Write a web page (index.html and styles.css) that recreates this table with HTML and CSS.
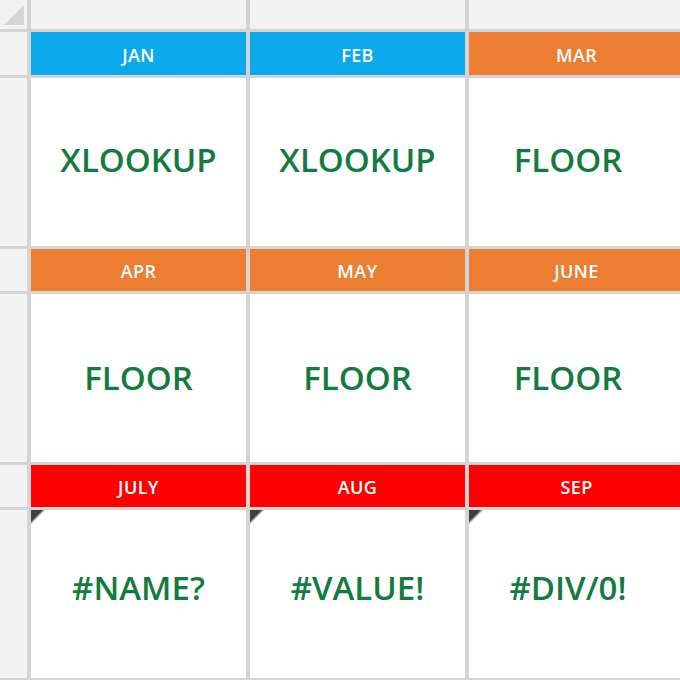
FILE: index.html
```html
<!DOCTYPE html>
<html>
<head>
<meta charset="utf-8">
<link rel="stylesheet" href="styles.css">
</head>
<body>
<div class="sheet">
  <div class="corner"><span class="select-all"></span></div>
  <div class="colhead"></div>
  <div class="colhead"></div>
  <div class="colhead"></div>

  <div class="rowhead"></div>
  <div class="month blue">JAN</div>
  <div class="month blue">FEB</div>
  <div class="month orange">MAR</div>

  <div class="rowhead"></div>
  <div class="cell row-a">XLOOKUP</div>
  <div class="cell row-a">XLOOKUP</div>
  <div class="cell row-a last-col">FLOOR</div>

  <div class="rowhead"></div>
  <div class="month orange">APR</div>
  <div class="month orange">MAY</div>
  <div class="month orange">JUNE</div>

  <div class="rowhead"></div>
  <div class="cell row-b">FLOOR</div>
  <div class="cell row-b">FLOOR</div>
  <div class="cell row-b last-col">FLOOR</div>

  <div class="rowhead"></div>
  <div class="month red">JULY</div>
  <div class="month red">AUG</div>
  <div class="month red">SEP</div>

  <div class="rowhead"></div>
  <div class="cell row-c err">#NAME?</div>
  <div class="cell row-c err">#VALUE!</div>
  <div class="cell row-c err last-col">#DIV/0!</div>
</div>
</body>
</html>
```

FILE: styles.css
```css
html, body {
  margin: 0;
  padding: 0;
  background: #d4d4d4;
  overflow: hidden;
}

.sheet {
  display: grid;
  grid-template-columns: 27px 215px 215px 215px;
  grid-template-rows: 29px 43px 168px 42px 168px 42px 168px;
  column-gap: 4px;
  row-gap: 3px;
  background: #d4d4d4;
  width: 684px;
  padding-bottom: 3px;
  font-family: "Open Sans", "Noto Sans", sans-serif;
}

.corner {
  background: #f2f2f2;
  position: relative;
}

.select-all {
  position: absolute;
  left: 4px;
  top: 5px;
  width: 0;
  height: 0;
  border-left: 20px solid transparent;
  border-bottom: 20px solid #d5d5d5;
}

.colhead,
.rowhead {
  background: #f2f2f2;
}

.month {
  display: flex;
  align-items: center;
  justify-content: center;
  color: #ffffff;
  font-size: 18px;
  font-weight: 600;
  letter-spacing: 0.4px;
  padding-top: 2px;
}

.blue { background: #0caaec; }
.orange { background: #ed7d31; }
.red { background: #ff0000; }

.cell {
  background: #ffffff;
  display: flex;
  align-items: center;
  justify-content: center;
  color: #137a40;
  font-size: 33px;
  font-weight: 600;
  position: relative;
}

.row-a { padding-bottom: 6px; }
.row-b { padding-bottom: 2px; }
.row-c { padding-bottom: 14px; }

.last-col { padding-right: 17px; }

.err::before {
  content: "";
  position: absolute;
  left: 0;
  top: 0;
  width: 0;
  height: 0;
  border-top: 14px solid #a8a8a8;
  border-right: 14px solid transparent;
}

.err::after {
  content: "";
  position: absolute;
  left: 0;
  top: 0;
  width: 0;
  height: 0;
  border-top: 12px solid #404040;
  border-right: 12px solid transparent;
}
```
